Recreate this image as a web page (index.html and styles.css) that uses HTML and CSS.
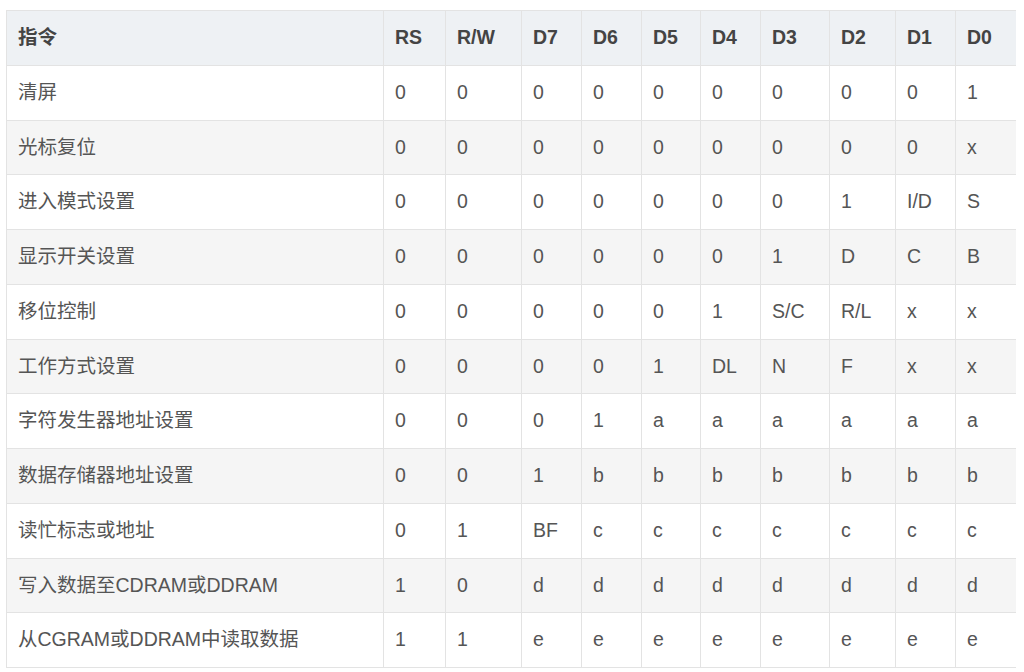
FILE: index.html
```html
<!DOCTYPE html>
<html lang="zh-CN">
<head>
<meta charset="utf-8">
<title>指令表</title>
<link rel="stylesheet" href="styles.css">
</head>
<body>
<table class="cmd-table">
  <colgroup>
    <col class="c-name">
    <col class="c-rs">
    <col class="c-rw">
    <col class="c-d7">
    <col class="c-d6">
    <col class="c-d5">
    <col class="c-d4">
    <col class="c-d3">
    <col class="c-d2">
    <col class="c-d1">
    <col class="c-d0">
  </colgroup>
  <thead>
    <tr><th>指令</th><th>RS</th><th>R/W</th><th>D7</th><th>D6</th><th>D5</th><th>D4</th><th>D3</th><th>D2</th><th>D1</th><th>D0</th></tr>
  </thead>
  <tbody>
    <tr><td>清屏</td><td>0</td><td>0</td><td>0</td><td>0</td><td>0</td><td>0</td><td>0</td><td>0</td><td>0</td><td>1</td></tr>
    <tr><td>光标复位</td><td>0</td><td>0</td><td>0</td><td>0</td><td>0</td><td>0</td><td>0</td><td>0</td><td>0</td><td>x</td></tr>
    <tr><td>进入模式设置</td><td>0</td><td>0</td><td>0</td><td>0</td><td>0</td><td>0</td><td>0</td><td>1</td><td>I/D</td><td>S</td></tr>
    <tr><td>显示开关设置</td><td>0</td><td>0</td><td>0</td><td>0</td><td>0</td><td>0</td><td>1</td><td>D</td><td>C</td><td>B</td></tr>
    <tr><td>移位控制</td><td>0</td><td>0</td><td>0</td><td>0</td><td>0</td><td>1</td><td>S/C</td><td>R/L</td><td>x</td><td>x</td></tr>
    <tr><td>工作方式设置</td><td>0</td><td>0</td><td>0</td><td>0</td><td>1</td><td>DL</td><td>N</td><td>F</td><td>x</td><td>x</td></tr>
    <tr><td>字符发生器地址设置</td><td>0</td><td>0</td><td>0</td><td>1</td><td>a</td><td>a</td><td>a</td><td>a</td><td>a</td><td>a</td></tr>
    <tr><td>数据存储器地址设置</td><td>0</td><td>0</td><td>1</td><td>b</td><td>b</td><td>b</td><td>b</td><td>b</td><td>b</td><td>b</td></tr>
    <tr><td>读忙标志或地址</td><td>0</td><td>1</td><td>BF</td><td>c</td><td>c</td><td>c</td><td>c</td><td>c</td><td>c</td><td>c</td></tr>
    <tr><td>写入数据至CDRAM或DDRAM</td><td>1</td><td>0</td><td>d</td><td>d</td><td>d</td><td>d</td><td>d</td><td>d</td><td>d</td><td>d</td></tr>
    <tr><td>从CGRAM或DDRAM中读取数据</td><td>1</td><td>1</td><td>e</td><td>e</td><td>e</td><td>e</td><td>e</td><td>e</td><td>e</td><td>e</td></tr>
  </tbody>
</table>
</body>
</html>
```

FILE: styles.css
```css
html, body {
  background: #ffffff;
}

body {
  margin: 10px 8px 0 6px;
  font-family: "Liberation Sans", "Noto Sans CJK SC", sans-serif;
  font-size: 19.5px;
  color: #555555;
}

.cmd-table {
  border-collapse: collapse;
  table-layout: fixed;
  width: 1010px;
}

.c-name { width: 377px; }
.c-rs { width: 62px; }
.c-rw { width: 76px; }
.c-d7 { width: 60px; }
.c-d6 { width: 60px; }
.c-d5 { width: 59px; }
.c-d4 { width: 60px; }
.c-d3 { width: 69px; }
.c-d2 { width: 66px; }
.c-d1 { width: 60px; }
.c-d0 { width: 61px; }

.cmd-table th,
.cmd-table td {
  border: 1px solid #e3e3e3;
  padding: 15px 10px 15px 11px;
  line-height: 23.75px;
  text-align: left;
  vertical-align: middle;
  white-space: nowrap;
}

.cmd-table th {
  background: #eef1f4;
  color: #444444;
  font-weight: bold;
}

.cmd-table tbody tr:nth-child(even) td {
  background: #f5f5f5;
}
```
